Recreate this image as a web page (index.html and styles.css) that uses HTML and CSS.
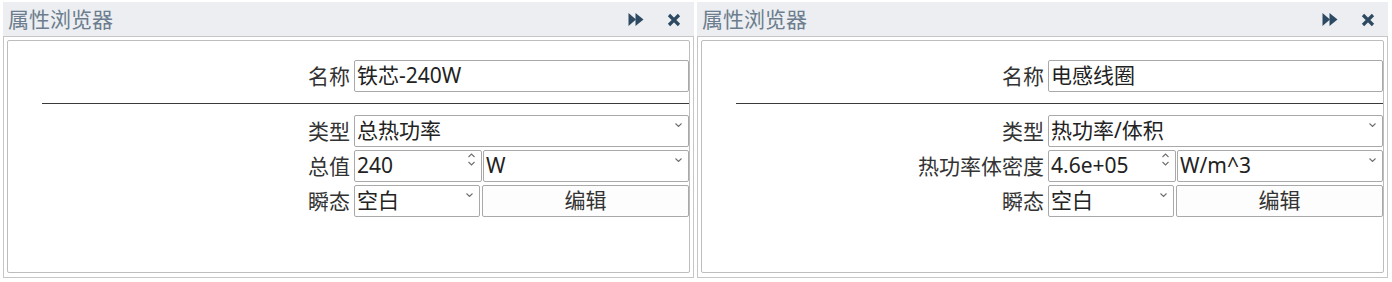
FILE: index.html
```html
<!DOCTYPE html>
<html lang="zh-CN">
<head>
  <meta charset="UTF-8">
  <title>属性浏览器</title>
  <link rel="stylesheet" href="styles.css">
</head>
<body>
  <div class="docks">

    <!-- 左侧：铁芯 -->
    <div class="dock">
      <div class="dock-title">
        <span class="dock-name">属性浏览器</span>
        <svg class="tool ff" width="16" height="15" viewBox="0 0 16 15"><polygon points="0.5,1 8,7.5 0.5,14"/><polygon points="7.5,1 15.5,7.5 7.5,14"/></svg>
        <svg class="tool close" width="14" height="14" viewBox="0 0 14 14"><path d="M2 2 L12 12 M12 2 L2 12"/></svg>
      </div>
      <div class="dock-body">
        <div class="prop-box">
          <div class="form-row first">
            <span class="lbl">名称</span>
            <div class="field">铁芯-240W</div>
          </div>
          <div class="sep"></div>
          <div class="form-rows">
            <div class="form-row">
              <span class="lbl">类型</span>
              <div class="field combo">总热功率
                <svg class="chev" width="7" height="4" viewBox="0 0 7 4"><polyline points="0.5,0.5 3.5,3.5 6.5,0.5"/></svg>
              </div>
            </div>
            <div class="form-row">
              <span class="lbl">总值</span>
              <div class="pair">
                <div class="field spin">240
                  <svg class="spin-arr" width="7" height="13" viewBox="0 0 7 13"><polyline points="0.5,4 3.5,1 6.5,4"/><polyline points="0.5,9 3.5,12 6.5,9"/></svg>
                </div>
                <div class="field combo">W
                  <svg class="chev" width="7" height="4" viewBox="0 0 7 4"><polyline points="0.5,0.5 3.5,3.5 6.5,0.5"/></svg>
                </div>
              </div>
            </div>
            <div class="form-row">
              <span class="lbl">瞬态</span>
              <div class="pair wide-gap">
                <div class="field combo small">空白
                  <svg class="chev" width="7" height="4" viewBox="0 0 7 4"><polyline points="0.5,0.5 3.5,3.5 6.5,0.5"/></svg>
                </div>
                <div class="btn">编辑</div>
              </div>
            </div>
          </div>
        </div>
      </div>
    </div>

    <!-- 右侧：电感线圈 -->
    <div class="dock">
      <div class="dock-title">
        <span class="dock-name">属性浏览器</span>
        <svg class="tool ff" width="16" height="15" viewBox="0 0 16 15"><polygon points="0.5,1 8,7.5 0.5,14"/><polygon points="7.5,1 15.5,7.5 7.5,14"/></svg>
        <svg class="tool close" width="14" height="14" viewBox="0 0 14 14"><path d="M2 2 L12 12 M12 2 L2 12"/></svg>
      </div>
      <div class="dock-body">
        <div class="prop-box">
          <div class="form-row first">
            <span class="lbl">名称</span>
            <div class="field">电感线圈</div>
          </div>
          <div class="sep"></div>
          <div class="form-rows">
            <div class="form-row">
              <span class="lbl">类型</span>
              <div class="field combo">热功率/体积
                <svg class="chev" width="7" height="4" viewBox="0 0 7 4"><polyline points="0.5,0.5 3.5,3.5 6.5,0.5"/></svg>
              </div>
            </div>
            <div class="form-row">
              <span class="lbl">热功率体密度</span>
              <div class="pair">
                <div class="field spin">4.6e+05
                  <svg class="spin-arr" width="7" height="13" viewBox="0 0 7 13"><polyline points="0.5,4 3.5,1 6.5,4"/><polyline points="0.5,9 3.5,12 6.5,9"/></svg>
                </div>
                <div class="field combo">W/m^3
                  <svg class="chev" width="7" height="4" viewBox="0 0 7 4"><polyline points="0.5,0.5 3.5,3.5 6.5,0.5"/></svg>
                </div>
              </div>
            </div>
            <div class="form-row">
              <span class="lbl">瞬态</span>
              <div class="pair wide-gap">
                <div class="field combo small">空白
                  <svg class="chev" width="7" height="4" viewBox="0 0 7 4"><polyline points="0.5,0.5 3.5,3.5 6.5,0.5"/></svg>
                </div>
                <div class="btn">编辑</div>
              </div>
            </div>
          </div>
        </div>
      </div>
    </div>

  </div>
</body>
</html>
```

FILE: styles.css
```css
body {
  margin: 0;
  background: #ffffff;
  font-family: "Noto Sans", "Noto Sans CJK SC", sans-serif;
  color: #222222;
}

.docks {
  display: flex;
  gap: 3px;
  padding: 2px 0 0 3px;
}

.dock {
  width: 691px;
}

.dock-title {
  height: 34px;
  box-sizing: border-box;
  background: #eceef1;
  display: flex;
  align-items: center;
  padding: 0 13px 0 5px;
  color: #6b7d8e;
  font-size: 21px;
}

.dock-name {
  flex: 1;
  line-height: 34px;
}

.tool {
  flex: none;
}

.tool.ff {
  fill: #2d4a62;
  margin-right: 23px;
}

.tool.close {
  stroke: #2d4a62;
  stroke-width: 3.2;
  fill: none;
  margin-top: 2px;
}

.dock-body {
  height: 242px;
  box-sizing: border-box;
  border: 1px solid #c6c6c6;
  padding: 3px 3px 4px 3px;
}

.prop-box {
  height: 233px;
  box-sizing: border-box;
  border: 1px solid #bdbdbd;
  border-radius: 2px;
  padding-top: 19px;
}

.form-row {
  display: grid;
  grid-template-columns: 1fr 335px;
  column-gap: 4px;
  align-items: center;
  font-size: 21px;
}

.form-rows {
  display: flex;
  flex-direction: column;
  gap: 3px;
}

.lbl {
  text-align: right;
  color: #333333;
  line-height: 32px;
}

.field {
  position: relative;
  height: 32px;
  box-sizing: border-box;
  border: 1px solid #a9a9a9;
  border-radius: 2px;
  padding-left: 2px;
  line-height: 29px;
  background: #ffffff;
  white-space: nowrap;
}

.sep {
  height: 1px;
  background: #3a3a3a;
  margin: 11px 0 11px 34px;
}

.pair {
  display: flex;
  gap: 1px;
}

.pair.wide-gap {
  gap: 2px;
}

.pair .combo,
.pair .btn {
  flex: 1;
}

.pair .spin {
  width: 128px;
  flex: none;
}

.pair .combo.small {
  width: 126px;
  flex: none;
}

.chev {
  position: absolute;
  right: 6px;
  top: 7px;
  fill: none;
  stroke: #6f6f6f;
  stroke-width: 1.1;
}

.spin-arr {
  position: absolute;
  right: 6px;
  top: 2px;
  fill: none;
  stroke: #6f6f6f;
  stroke-width: 1.1;
}

.btn {
  height: 32px;
  box-sizing: border-box;
  border: 1px solid #a9a9a9;
  border-radius: 2px;
  background: #fdfdfd;
  text-align: center;
  line-height: 29px;
  color: #333333;
}
```
